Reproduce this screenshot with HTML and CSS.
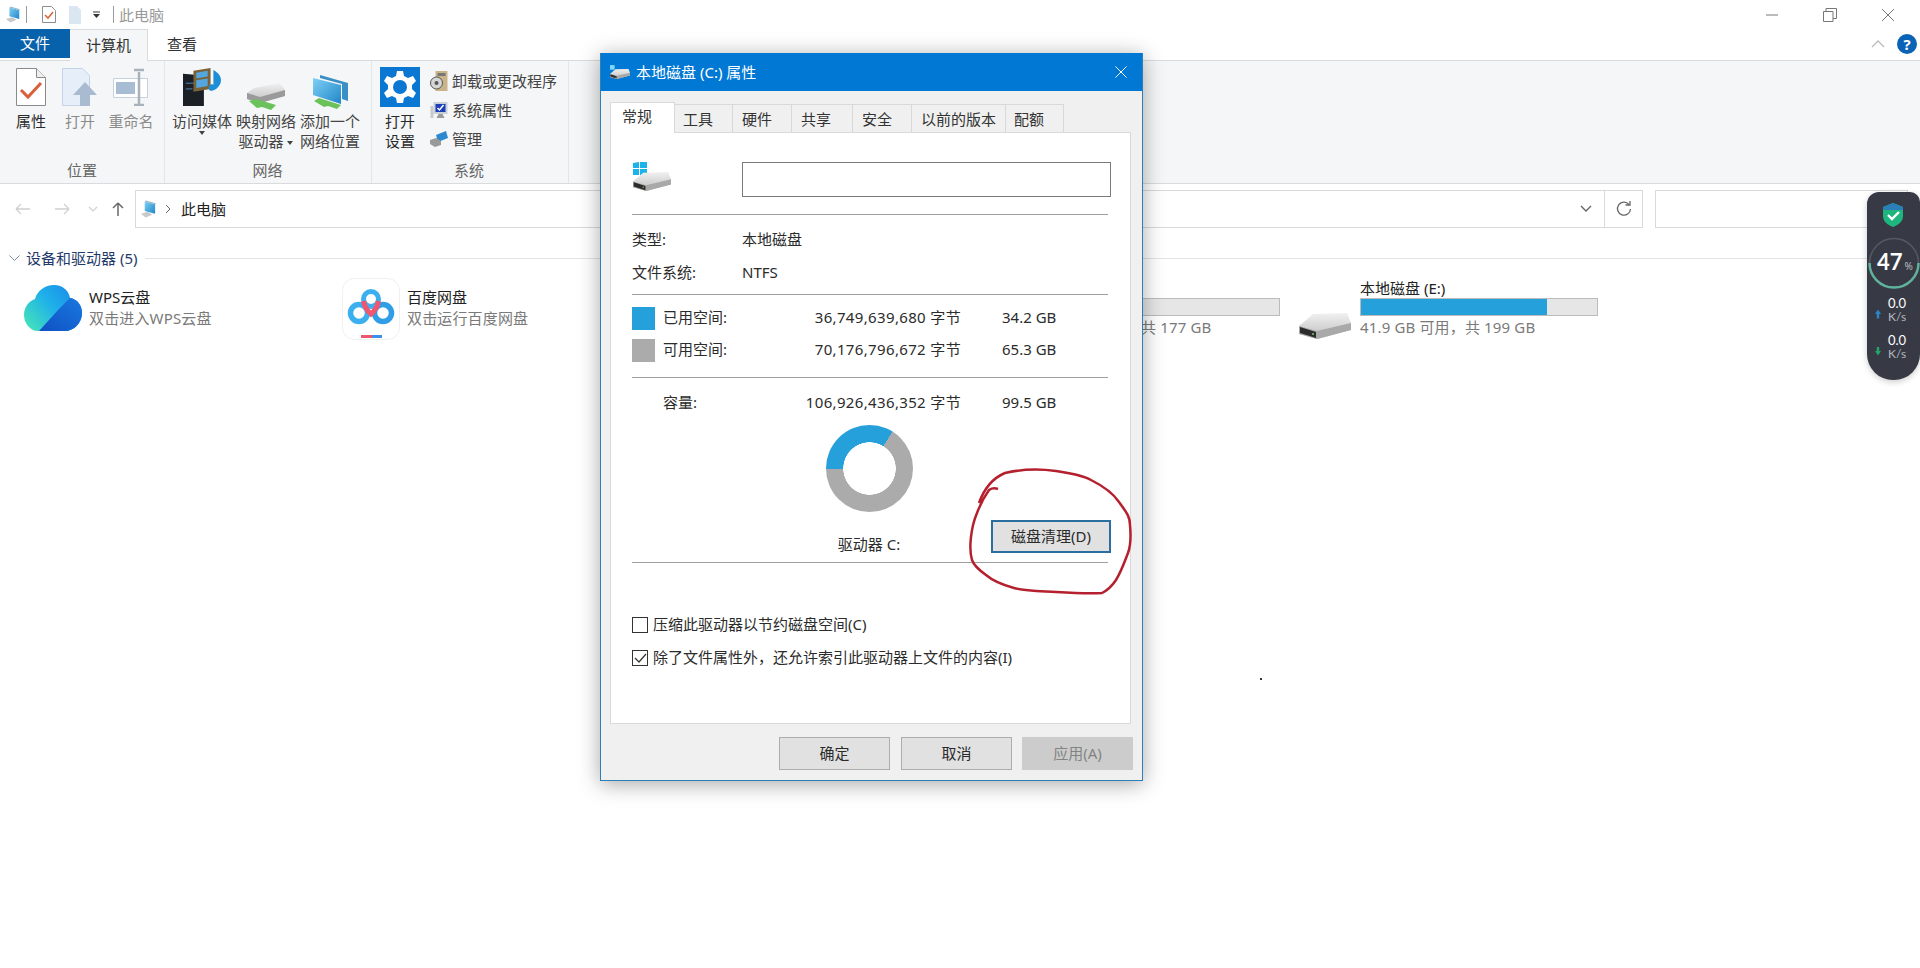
FILE: index.html
```html
<!DOCTYPE html>
<html lang="zh-CN">
<head>
  <meta charset="UTF-8" />
  <title>此电脑</title>
  <link rel="stylesheet" href="styles.css">
</head>
<body>
  <svg class="defs" width="0" height="0">
    <defs>
      <linearGradient id="g-drive" x1="0" y1="0" x2="0" y2="1">
        <stop offset="0" stop-color="#f1f1f1"/><stop offset="1" stop-color="#bdbdbd"/>
      </linearGradient>
      <linearGradient id="g-screen" x1="0" y1="0" x2="1" y2="1">
        <stop offset="0" stop-color="#7fd0f5"/><stop offset="1" stop-color="#1f86c9"/>
      </linearGradient>
      <linearGradient id="g-cloud" x1="0" y1="0.7" x2="0.9" y2="0.1">
        <stop offset="0" stop-color="#3fdcc0"/><stop offset="0.5" stop-color="#1fb0ea"/><stop offset="1" stop-color="#1a8ae8"/>
      </linearGradient>
      <linearGradient id="g-cloud-b" x1="0" y1="1" x2="1" y2="0">
        <stop offset="0" stop-color="#0f50c4"/><stop offset="1" stop-color="#1a78e0"/>
      </linearGradient>
      <symbol id="drive" viewBox="0 0 52 26">
        <path d="M14 1 L48 0 L52 10 L52 17 L18 26 L0 21 L0 13 Z" fill="url(#g-drive)"/>
        <path d="M0 13 L18 18 L52 10 L52 17 L18 26 L0 21 Z" fill="#a9a9a9"/>
        <path d="M1 14 L17 19 L17 25 L1 20 Z" fill="#2c2c2c"/>
        <circle cx="14" cy="21" r="1" fill="#7fc36a"/>
      </symbol>
      <symbol id="pc" viewBox="0 0 18 18">
        <path d="M1 14 L8 12 L13 15 L6 18 Z" fill="#c9c9c9"/>
        <path d="M5 1 L16 4 L16 14 L5 11 Z" fill="url(#g-screen)"/>
        <path d="M5 1 L6 0 L17 3 L16 4 Z" fill="#9fb6c6"/>
      </symbol>
    </defs>
  </svg>

  <div class="explorer">
    <div class="titlebar">
      <svg class="tb-pc" width="16" height="17"><use href="#pc"/></svg>
      <span class="tb-sep"></span>
      <svg class="tb-check" width="14" height="17" viewBox="0 0 14 17">
        <path d="M.5.5h9l4 4v12H.5z" fill="#fff" stroke="#8d8d8d"/>
        <path d="M3 9l3 3 5-6" fill="none" stroke="#d9663a" stroke-width="1.6"/>
      </svg>
      <svg class="tb-page" width="12" height="18" viewBox="0 0 12 18">
        <path d="M0 0h8l4 4v14H0z" fill="#dbe6f3"/>
      </svg>
      <svg class="tb-down" width="9" height="8" viewBox="0 0 9 8">
        <path d="M1 1h7" stroke="#333"/><path d="M1 3h7L4.500 7z" fill="#333"/>
      </svg>
      <span class="tb-sep tb-sep-b"></span>
      <span class="tb-title">此电脑</span>
      <div class="win-controls">
        <svg width="14" height="14" viewBox="0 0 14 14"><path d="M1 7h12" stroke="#777"/></svg>
        <svg width="14" height="14" viewBox="0 0 14 14" fill="none" stroke="#777"><path d="M.5 3.500h9.500v10H.5z"/><path d="M3 3.500V.5h10.500v10H10"/></svg>
        <svg width="14" height="14" viewBox="0 0 14 14" stroke="#777"><path d="M1 1l12 12M13 1L1 13"/></svg>
      </div>
    </div>

    <div class="tabs">
      <div class="tab-file">文件</div>
      <div class="tab tab-on">计算机</div>
      <div class="tab">查看</div>
      <div class="tabs-right">
        <svg width="14" height="8" viewBox="0 0 14 8"><path d="M1 7l6-6 6 6" fill="none" stroke="#bbb" stroke-width="1.300"/></svg>
        <div class="help">?</div>
      </div>
    </div>

    <div class="ribbon">
      <div class="group group-pos">
        <div class="group-items">
          <div class="rb rb-w50">
            <svg class="rb-icon" width="30" height="38" viewBox="0 0 30 38">
              <path d="M.5.5h20l9 9v28H.5z" fill="#fff" stroke="#8a8a8a"/>
              <path d="M20.500.5v9h9" fill="#eee" stroke="#8a8a8a"/>
              <path d="M5 22l7 7 13-14" fill="none" stroke="#d9603a" stroke-width="3"/>
            </svg>
            <div class="rb-label">属性</div>
          </div>
          <div class="rb rb-w48 rb-off">
            <svg class="rb-icon" width="36" height="38" viewBox="0 0 36 38">
              <path d="M.5.5h20l7 7v30H.5z" fill="#e6eef9" stroke="#c3d2e6"/>
              <path d="M23 14l12 13h-7v11H18V27h-7z" fill="#a9bbd0"/>
            </svg>
            <div class="rb-label">打开</div>
          </div>
          <div class="rb rb-w54 rb-off">
            <svg class="rb-icon" width="36" height="38" viewBox="0 0 36 38">
              <path d="M.5 10.500h34v19H.5z" fill="#fff" stroke="#c7d1dc"/>
              <path d="M3 14h19v12H3z" fill="#a8bcd4"/>
              <path d="M26 4v32M21 2h10M21 37h10" stroke="#a9b2bb" stroke-width="2.500" fill="none"/>
            </svg>
            <div class="rb-label">重命名</div>
          </div>
        </div>
        <div class="group-label">位置</div>
      </div>

      <div class="group group-net">
        <div class="group-items">
          <div class="rb rb-w64">
            <svg class="rb-icon" width="42" height="40" viewBox="0 0 42 40">
              <path d="M1 6l22 2v32H1z" fill="#1b2026"/>
              <path d="M4 16h10M4 22h7" stroke="#4a8cc0"/>
              <path d="M12 3l18-3v22l-18 3z" fill="#7a6238"/>
              <path d="M15 5l12-2v6l-12 2zM15 13l12-2v8l-12 2z" fill="#53a7de"/>
              <path d="M33 2c5 3 8 6 8 11 0 6-6 11-10 11s-4-6 0-7c1 0 2 0 2 1z" fill="#1c8ed8"/>
            </svg>
            <div class="rb-label">访问媒体</div>
            <div class="caret caret-under"></div>
          </div>
          <div class="rb rb-w64">
            <svg class="rb-icon rb-icon-low" width="40" height="29" viewBox="0 0 40 29">
              <path d="M8 6L34 1l5 7v6L14 21 1 17v-6z" fill="url(#g-drive)"/>
              <path d="M1 11l13 4 25-7v6L14 21 1 17z" fill="#9a9a9a"/>
              <path d="M3 19l7-2 20 6-5 5-9-3-5 1z" fill="#6cc25a"/>
            </svg>
            <div class="rb-label">映射网络<br>驱动器 <span class="caret"></span></div>
          </div>
          <div class="rb rb-w64">
            <svg class="rb-icon rb-icon-low2" width="36" height="36" viewBox="0 0 36 36">
              <path d="M8 0l28 8v18l-6-2V9L8 3z" fill="#3a8fc6"/>
              <path d="M1 3l28 7v19L1 20z" fill="url(#g-screen)"/>
              <path d="M2 26l5-3 22 7-4 4-9-3-4 1z" fill="#6cc25a"/>
            </svg>
            <div class="rb-label">添加一个<br>网络位置</div>
          </div>
        </div>
        <div class="group-label">网络</div>
      </div>

      <div class="group group-sys">
        <div class="group-items">
          <div class="rb rb-w40">
            <div class="gear-tile">
              <svg width="34" height="34" viewBox="0 0 34 34">
                <path d="M14 1h6l1 5 4 2 5-2 3 5-4 4v4l4 4-3 5-5-2-4 2-1 5h-6l-1-5-4-2-5 2-3-5 4-4v-4L1 11l3-5 5 2 4-2z" fill="#fff"/>
                <circle cx="17" cy="17" r="7" fill="#0a78d2"/>
              </svg>
            </div>
            <div class="rb-label">打开<br>设置</div>
          </div>
          <div class="rb-list">
            <div class="rb-row">
              <svg width="17" height="20" viewBox="0 0 17 20">
                <path d="M5 0h12v20H5z" fill="#c9b48a"/><path d="M7 2h8v3H7z" fill="#777"/>
                <circle cx="6" cy="12" r="6" fill="#d6d6d6" stroke="#555"/><circle cx="6" cy="12" r="2" fill="#555"/>
              </svg>
              <span>卸载或更改程序</span>
            </div>
            <div class="rb-row">
              <svg width="17" height="18" viewBox="0 0 17 18">
                <path d="M0 5h3v12H0z" fill="#c9c9c9"/>
                <path d="M3 1h14v12H3z" fill="#c8d0d8"/><path d="M5 3h10v8H5z" fill="#1a3fb8"/>
                <path d="M7 7l2 2 4-5" fill="none" stroke="#fff" stroke-width="1.500"/>
                <path d="M8 13h4l2 4H6z" fill="#9a9a9a"/>
              </svg>
              <span>系统属性</span>
            </div>
            <div class="rb-row">
              <svg width="18" height="16" viewBox="0 0 18 16">
                <path d="M6 4l10-4 2 7-10 4z" fill="#2c89cf"/>
                <path d="M0 9l6-2 5 3v4l-6 2-5-3z" fill="#9a9a9a"/>
              </svg>
              <span>管理</span>
            </div>
          </div>
        </div>
        <div class="group-label">系统</div>
      </div>
    </div>

    <div class="navbar">
      <svg class="nav-arrows" width="124" height="18" viewBox="0 0 124 18" fill="none">
        <path d="M5 9h14M5 9l5-5M5 9l5 5" stroke="#d0d0d0" stroke-width="1.300"/>
        <path d="M44 9h14M58 9l-5-5M58 9l-5 5" stroke="#d0d0d0" stroke-width="1.300"/>
        <path d="M78 7l4 4 4-4" stroke="#d0d0d0" stroke-width="1.200"/>
        <path d="M107 16V3M107 3l-5 5M107 3l5 5" stroke="#6a6a6a" stroke-width="1.500"/>
      </svg>
      <div class="addr">
        <svg class="addr-pc" width="17" height="18"><use href="#pc"/></svg>
        <svg class="addr-sep" width="6" height="10" viewBox="0 0 6 10"><path d="M1 1l4 4-4 4" fill="none" stroke="#666"/></svg>
        <span>此电脑</span>
        <svg class="addr-drop" width="12" height="8" viewBox="0 0 12 8"><path d="M1 1l5 5 5-5" fill="none" stroke="#666" stroke-width="1.400"/></svg>
      </div>
      <div class="refresh">
        <svg width="16" height="16" viewBox="0 0 16 16" fill="none">
          <path d="M13 3.500A6.500 6.500 0 1 0 14.500 8" stroke="#666" stroke-width="1.300"/>
          <path d="M9.500 4h4.500V0" stroke="#666" stroke-width="1.300"/>
        </svg>
      </div>
      <div class="search"></div>
    </div>

    <div class="section">
      <svg width="11" height="7" viewBox="0 0 11 7"><path d="M.5.5l5 5 5-5" fill="none" stroke="#7a8aa0"/></svg>
      <span class="section-name">设备和驱动器 (5)</span>
      <span class="section-line"></span>
    </div>

    <div class="tiles">
      <div class="tile">
        <svg class="tile-icon" width="58" height="46" viewBox="0 0 58 46">
          <path d="M30 0c9 0 15 6 16 13 7 1 12 7 12 15 0 10-8 18-17 18H14C6 46 0 38 0 30s5-14 11-16C13 6 21 0 30 0z" fill="url(#g-cloud)"/>
          <path d="M35 24L46 13c7 1 12 7 12 15 0 10-8 18-17 18H15z" fill="url(#g-cloud-b)"/>
        </svg>
        <div class="tile-text">
          <div class="tile-name">WPS云盘</div>
          <div class="tile-sub">双击进入WPS云盘</div>
        </div>
      </div>
      <div class="tile">
        <svg class="tile-icon tile-icon-bd" width="58" height="62" viewBox="0 0 58 62">
          <rect x=".5" y=".5" width="57" height="61" rx="12" fill="#fff" stroke="#f0f0f0"/>
          <circle cx="17" cy="35" r="8.500" fill="none" stroke="#3cb0ee" stroke-width="5.500"/>
          <circle cx="41" cy="35" r="8.500" fill="none" stroke="#2f9ee6" stroke-width="5.500"/>
          <circle cx="29" cy="21" r="7.500" fill="none" stroke="#3cb0ee" stroke-width="5"/>
          <path d="M21.500 23c1 6 4 10 7.500 13 3.500-3 6.500-7 7.500-13" fill="none" stroke="#f0566f" stroke-width="5"/>
          <path d="M19 57h11v3H19z" fill="#f0566f"/><path d="M30 57h10v3H30z" fill="#3f8fe6"/>
        </svg>
        <div class="tile-text">
          <div class="tile-name">百度网盘</div>
          <div class="tile-sub">双击运行百度网盘</div>
        </div>
      </div>
      <div class="tile"></div>
      <div class="tile">
        <svg class="tile-drive" width="52" height="26"><use href="#drive"/></svg>
        <div class="tile-text tile-text-drive">
          <div class="tile-name">本地磁盘 (D:)</div>
          <div class="bar"></div>
          <div class="tile-sub tile-sub-d">共 177 GB</div>
        </div>
      </div>
      <div class="tile">
        <svg class="tile-drive" width="52" height="26"><use href="#drive"/></svg>
        <div class="tile-text tile-text-drive">
          <div class="tile-name">本地磁盘 (E:)</div>
          <div class="bar"><div class="bar-fill" style="width: 79%"></div></div>
          <div class="tile-sub">41.9 GB 可用，共 199 GB</div>
        </div>
      </div>
    </div>
  </div>

  <!-- 属性对话框 -->
  <div class="dialog">
    <div class="dlg-title">
      <svg width="20" height="14" viewBox="0 0 52 36"><path d="M0 0h12v12H0z" fill="#7fd6ff"/><use href="#drive" y="10" width="52" height="26"/></svg>
      <span>本地磁盘 (C:) 属性</span>
      <svg class="dlg-close" width="12" height="12" viewBox="0 0 12 12" stroke="#fff"><path d="M.5.5l11 11M11.500.5l-11 11"/></svg>
    </div>
    <div class="dlg-tabs">
      <div class="dlg-tab dlg-tab-on">常规</div>
      <div class="dlg-tab dlg-tab-58">工具</div>
      <div class="dlg-tab dlg-tab-59">硬件</div>
      <div class="dlg-tab dlg-tab-61">共享</div>
      <div class="dlg-tab dlg-tab-59">安全</div>
      <div class="dlg-tab dlg-tab-94">以前的版本</div>
      <div class="dlg-tab dlg-tab-58">配额</div>
    </div>
    <div class="panel">
      <div class="name-row">
        <svg class="name-icon" width="38" height="30" viewBox="0 0 38 30">
          <path d="M0 1l6-1v6H0zM7 0l7-1v7H7zM0 7h6v6H0zM7 7h7v7L7 13z" fill="#1cb4e8"/>
          <use href="#drive" x="0" y="9" width="38" height="21"/>
        </svg>
        <div class="name-input"></div>
      </div>
      <div class="rule rule-a"></div>
      <div class="info-row first"><span class="info-key">类型:</span><span>本地磁盘</span></div>
      <div class="info-row"><span class="info-key">文件系统:</span><span>NTFS</span></div>
      <div class="rule rule-b"></div>
      <div class="space-row space-first">
        <span class="swatch swatch-used"></span><span>已用空间:</span><span class="bytes">36,749,639,680 字节</span><span class="gb">34.2 GB</span>
      </div>
      <div class="space-row space-next">
        <span class="swatch swatch-free"></span><span>可用空间:</span><span class="bytes">70,176,796,672 字节</span><span class="gb">65.3 GB</span>
      </div>
      <div class="rule rule-c"></div>
      <div class="space-row space-cap">
        <span></span><span>容量:</span><span class="bytes">106,926,436,352 字节</span><span class="gb">99.5 GB</span>
      </div>
      <div class="chart-area">
        <div class="chart-col">
          <div class="donut"></div>
          <div class="drive-label">驱动器 C:</div>
        </div>
        <div class="clean-btn">磁盘清理(D)</div>
      </div>
      <div class="rule"></div>
      <div class="check-row check-first">
        <span class="checkbox"></span><span class="check-text">压缩此驱动器以节约磁盘空间(C)</span>
      </div>
      <div class="check-row check-next">
        <span class="checkbox">
          <svg width="14" height="14" viewBox="0 0 14 14"><path d="M2 7l4 4 7-8" fill="none" stroke="#333" stroke-width="1.200"/></svg>
        </span><span class="check-text">除了文件属性外，还允许索引此驱动器上文件的内容(I)</span>
      </div>
    </div>
    <div class="dlg-foot">
      <div class="dlg-btn dlg-btn-ok">确定</div>
      <div class="dlg-btn">取消</div>
      <div class="dlg-btn dlg-btn-off">应用(A)</div>
    </div>
  </div>

  <!-- 红圈标注 -->
  <svg class="annot" width="1920" height="968" viewBox="0 0 1920 968" fill="none" stroke="#b5202e" stroke-width="2.500">
    <path d="M979 503C984 489 993 478 1005 473C1022 469 1042 469 1056 471C1070 473 1082 475 1091 480C1105 487 1113 493 1119 502C1126 512 1130 516 1130 525C1131 536 1131 545 1128 553C1124 563 1122 570 1116 580C1112 586 1108 590 1102 593C1088 594 1072 593 1056 592C1040 591 1026 591 1014 588C1003 585 993 581 986 575C979 570 974 566 972 560C970 553 970 545 971 537C972 528 974 520 977 513C980 505 984 497 989 490C992 488 995 488 998 489"/>
  </svg>
  <div class="speck"></div>

  <!-- 悬浮窗 -->
  <div class="widget">
    <svg class="w-shield" width="22" height="24" viewBox="0 0 22 24">
      <path d="M11 0l10 4v9c0 6-5 9-10 11C6 22 1 19 1 13V4z" fill="#1fb57e"/>
      <path d="M11 0l10 4v3H1V4z" fill="#2b7fb8"/>
      <path d="M6 12l4 4 7-7" fill="none" stroke="#fff" stroke-width="2.400"/>
    </svg>
    <div class="w-gauge">
      <svg class="w-ring" width="54" height="54" viewBox="0 0 54 54" fill="none">
        <circle cx="27" cy="27" r="24.500" stroke="#555963" stroke-width="1.500"/>
        <path d="M2.500 27a24.500 24.500 0 0 0 49 0" stroke="#5fb39b" stroke-width="2.500"/>
      </svg>
      <span class="w-num">47</span><span class="w-pct">%</span>
    </div>
    <div class="w-speed w-speed-up">
      <span class="w-arrow w-arrow-up"></span>
      <div class="w-val"><div>0.0</div><div class="w-unit">K/s</div></div>
    </div>
    <div class="w-speed">
      <span class="w-arrow w-arrow-down"></span>
      <div class="w-val"><div>0.0</div><div class="w-unit">K/s</div></div>
    </div>
  </div>
</body>
</html>
```

FILE: styles.css
```css
* { box-sizing: border-box; }

html, body {
  margin: 0;
  height: 968px;
  overflow: hidden;
  background: #fff;
}

body {
  position: relative;
  font-family: "Noto Sans", "Noto Sans CJK SC", sans-serif;
  font-size: 15px;
  line-height: 20px;
  color: #2b2b2b;
}

.defs { position: absolute; }

/* 标题栏 */
.titlebar {
  display: flex;
  align-items: center;
  height: 29px;
  padding-left: 5px;
}
.tb-sep { width: 1px; height: 17px; background: #9a9a9a; margin-left: 5px; }
.tb-check { margin-left: 15px; }
.tb-page { margin-left: 13px; }
.tb-down { margin-left: 11px; }
.tb-sep-b { margin-left: 12px; }
.tb-title { margin-left: 5px; color: #999; }
.win-controls {
  margin-left: auto;
  display: flex;
  gap: 44px;
  padding-right: 25px;
}

/* 选项卡 */
.tabs {
  display: flex;
  height: 32px;
  border-bottom: 1px solid #dadbdc;
}
.tab-file {
  width: 70px;
  height: 29px;
  background: #0862ab;
  color: #fff;
  text-align: center;
  line-height: 28px;
}
.tab {
  padding: 0 19px;
  line-height: 30px;
  color: #333;
}
.tab-on {
  width: 78px;
  padding: 0;
  height: 32px;
  text-align: center;
  background: #f5f6f7;
  border: 1px solid #dadbdc;
  border-bottom: 0;
  border-left: 0;
  z-index: 1;
}
.tabs-right {
  margin-left: auto;
  display: flex;
  align-items: center;
  gap: 12px;
  padding: 0 3px 2px 0;
}
.help {
  width: 20px;
  height: 20px;
  border-radius: 50%;
  background: #0a63b5;
  color: #fff;
  font-weight: bold;
  font-size: 15px;
  text-align: center;
  line-height: 20px;
}

/* 功能区 */
.ribbon {
  display: flex;
  height: 123px;
  background: #f5f6f7;
  border-bottom: 1px solid #dadbdc;
}
.group {
  display: flex;
  flex-direction: column;
  border-right: 1px solid #e4e5e6;
}
.group-pos { width: 165px; padding-left: 6px; }
.group-net { width: 207px; padding-left: 5px; }
.group-sys { width: 197px; padding-left: 8px; }
.group-items { display: flex; flex: 1; padding-top: 6px; }
.group-label {
  height: 24px;
  line-height: 22px;
  text-align: center;
  color: #666;
  margin-left: -6px;
}
.group-sys .group-label { margin-left: -10px; }
.rb {
  position: relative;
  display: flex;
  flex-direction: column;
  align-items: center;
  text-align: center;
  white-space: nowrap;
}
.rb-w40 { width: 40px; }
.rb-w48 { width: 48px; }
.rb-w50 { width: 50px; }
.rb-w54 { width: 54px; }
.rb-w64 { width: 64px; }
.rb-off { color: #8b8b8b; }
.rb-icon { height: 38px; margin-bottom: 5px; margin-top: 1px; flex: none; }
.rb-icon-low { margin-top: 15px; margin-bottom: 0; height: 29px; }
.rb-icon-low2 { margin-top: 8px; margin-bottom: 0; height: 36px; }
.rb-label { line-height: 20px; color: inherit; }
.rb-w64 .rb-label { color: #444; }
.caret {
  display: inline-block;
  width: 0;
  height: 0;
  border: 3px solid transparent;
  border-top: 4px solid #444;
  border-bottom: 0;
  vertical-align: middle;
}
.gear-tile {
  display: flex;
  align-items: center;
  justify-content: center;
  width: 40px;
  height: 40px;
  background: #0a78d2;
  margin-bottom: 4px;
}
.rb-list {
  margin-left: 10px;
  padding-top: 4px;
  display: flex;
  flex-direction: column;
  gap: 9px;
}
.rb-row {
  display: flex;
  align-items: center;
  height: 20px;
  white-space: nowrap;
  color: #444;
}
.rb-row svg { width: 18px; margin-right: 4px; }

/* 地址栏 */
.navbar {
  display: flex;
  align-items: center;
  height: 44px;
  padding-top: 6px;
}
.nav-arrows { margin-left: 11px; flex: none; }
.addr {
  display: flex;
  align-items: center;
  width: 1469px;
  height: 38px;
  border: 1px solid #d9d9d9;
  border-right: 0;
  color: #222;
}
.addr-pc { margin-left: 4px; }
.addr-sep { margin-left: 8px; }
.addr span { margin-left: 10px; }
.addr-drop { margin-left: auto; margin-right: 12px; }
.refresh {
  display: flex;
  align-items: center;
  justify-content: center;
  width: 39px;
  height: 38px;
  border: 1px solid #d9d9d9;
}
.search {
  width: 253px;
  height: 38px;
  margin-left: 12px;
  border: 1px solid #d9d9d9;
}

/* 内容区 */
.section {
  display: flex;
  align-items: center;
  height: 24px;
  margin-top: 18px;
  padding-left: 9px;
}
.section-name { margin-left: 6px; color: #1f3a6b; white-space: nowrap; }
.section-line { flex: 1; height: 1px; margin-left: 8px; background: #e2e4e8; }

.tiles {
  display: flex;
  padding-left: 24px;
  margin-top: 8px;
}
.tile {
  display: flex;
  width: 318px;
  flex: none;
  height: 62px;
  position: relative;
}
.tile-icon { margin-top: 7px; flex: none; }
.tile-icon-bd { margin-top: 0; }
.tile-text { margin-left: 7px; padding-top: 9px; white-space: nowrap; }
.tile-name { color: #222; line-height: 21px; }
.tile-sub { color: #7a7a7a; line-height: 21px; letter-spacing: .15px; }
.tile-drive { margin: 35px 0 0 3px; flex: none; }
.tile-text-drive { margin-left: 9px; width: 238px; padding-top: 0; }
.tile-text-drive .tile-name { line-height: 20px; }
.tile-text-drive .tile-sub { margin-top: 1px; }
.tile-sub-d { padding-left: 99px; }
.bar {
  height: 18px;
  background: #e6e6e6;
  border: 1px solid #bcbcbc;
}
.bar-fill {
  height: 100%;
  background: #26a0da;
}

/* 对话框 */
.dialog {
  position: absolute;
  left: 600px;
  top: 53px;
  width: 543px;
  height: 728px;
  background: #f0f0f0;
  border: 1px solid #2d7fb8;
  border-top: 0;
  box-shadow: 0 3px 20px rgba(0, 0, 0, .35);
  display: flex;
  flex-direction: column;
  z-index: 5;
}
.dlg-title {
  display: flex;
  align-items: center;
  height: 38px;
  flex: none;
  padding-left: 9px;
  background: #0078d4;
  color: #fff;
}
.dlg-title span { margin-left: 6px; }
.dlg-close { margin-left: auto; margin-right: 15px; }
.dlg-tabs {
  display: flex;
  align-items: flex-end;
  height: 41px;
  flex: none;
  padding-left: 9px;
}
.dlg-tab {
  height: 28px;
  padding-left: 9px;
  background: #f0f0f0;
  border: 1px solid #d9d9d9;
  border-left: 0;
  border-bottom: 0;
  line-height: 28px;
  color: #333;
  white-space: nowrap;
}
.dlg-tab-on {
  position: relative;
  width: 65px;
  height: 31px;
  padding-left: 11px;
  background: #fff;
  border-left: 1px solid #d9d9d9;
  line-height: 26px;
  margin-bottom: -1px;
  z-index: 1;
}
.dlg-tab-58 { width: 58px; padding-left: 8px; }
.dlg-tab-59 { width: 59px; }
.dlg-tab-61 { width: 61px; }
.dlg-tab-94 { width: 94px; }

.panel {
  width: 521px;
  height: 592px;
  flex: none;
  margin-left: 9px;
  padding: 29px 22px 0 21px;
  background: #fff;
  border: 1px solid #d9d9d9;
}
.name-row { display: flex; height: 35px; }
.name-icon { width: 38px; margin-left: 1px; flex: none; }
.name-input {
  width: 369px;
  height: 35px;
  margin-left: 71px;
  flex: none;
  border: 1px solid #7a7a7a;
}
.rule { height: 1px; background: #a0a0a0; }
.rule-a { margin-top: 17px; }
.rule-b { margin-top: 4px; }
.rule-c { margin-top: 15px; }
.info-row {
  display: flex;
  height: 33px;
  align-items: center;
}
.info-row span { padding-bottom: 3px; }
.info-row.first { margin-top: 9px; }
.info-key { width: 110px; }
.space-row {
  display: grid;
  grid-template-columns: 31px 100px 198px 41px auto;
  align-items: center;
  height: 23px;
  white-space: nowrap;
}
.space-row span:not(.swatch) { padding-bottom: 3px; }
.space-first { margin-top: 12px; }
.space-next { margin-top: 9px; }
.space-cap { margin-top: 13px; height: 24px; }
.swatch { width: 23px; height: 23px; }
.swatch-used { background: #26a0da; }
.swatch-free { background: #ababab; }
.bytes { text-align: right; letter-spacing: .35px; }
.gb { grid-column: 5; }

.chart-area { display: flex; height: 147px; }
.chart-col {
  display: flex;
  flex-direction: column;
  align-items: center;
  width: 86px;
  margin-left: 194px;
  padding-top: 10px;
  flex: none;
}
.donut {
  width: 87px;
  height: 87px;
  flex: none;
  border-radius: 50%;
  background:
    radial-gradient(circle, #fff 0 26px, transparent 26.500px),
    conic-gradient(from 32deg, #ababab 0 238deg, #26a0da 238deg 360deg);
}
.drive-label { margin-top: 20px; line-height: 24px; white-space: nowrap; }
.clean-btn {
  width: 120px;
  height: 33px;
  margin: 105px 0 0 79px;
  flex: none;
  background: #e1e1e1;
  border: 2px solid #2a6f9f;
  text-align: center;
  line-height: 28px;
}
.check-row {
  display: flex;
  align-items: center;
  height: 16px;
  gap: 5px;
  white-space: nowrap;
}
.check-text { padding-bottom: 2px; }
.check-first { margin-top: 54px; }
.check-next { margin-top: 17px; }
.checkbox {
  display: flex;
  width: 16px;
  height: 16px;
  flex: none;
  background: #fff;
  border: 1px solid #333;
}
.dlg-foot {
  display: flex;
  justify-content: flex-end;
  gap: 10px;
  padding: 13px 9px 0 0;
}
.dlg-btn {
  width: 111px;
  height: 33px;
  background: #e1e1e1;
  border: 1px solid #adadad;
  text-align: center;
  line-height: 31px;
}
.dlg-btn-ok { margin-right: 1px; }
.dlg-btn-off {
  background: #cccccc;
  border-color: #cccccc;
  color: #838383;
}

/* 标注 */
.annot {
  position: absolute;
  left: 0;
  top: 0;
  z-index: 6;
  pointer-events: none;
}
.speck {
  position: absolute;
  left: 1260px;
  top: 678px;
  width: 2px;
  height: 2px;
  background: #333;
}

/* 悬浮窗 */
.widget {
  position: absolute;
  left: 1867px;
  top: 192px;
  width: 53px;
  height: 188px;
  background: #373a45;
  border-radius: 12px 10px 26px 26px;
  box-shadow: 0 2px 6px rgba(0, 0, 0, .2);
  color: #fff;
  z-index: 7;
}
.w-shield { display: block; margin: 11px 0 0 15px; }
.w-gauge {
  position: relative;
  display: flex;
  align-items: baseline;
  justify-content: flex-start;
  height: 54px;
  margin-top: 9px;
  padding: 13px 0 0 10px;
}
.w-ring { position: absolute; left: 0; top: 0; }
.w-num { font-family: "Lato", sans-serif; font-weight: bold; font-size: 22px; line-height: 26px; }
.w-pct { font-size: 10px; margin-left: 2px; color: #bbb; }
.w-speed {
  display: flex;
  align-items: center;
  margin-top: 9px;
  padding-left: 8px;
}
.w-speed-up { margin-top: 6px; }
.w-arrow { width: 6px; height: 9px; margin-top: 8px; }
.w-arrow-up { background: #2b86c9; clip-path: polygon(50% 0, 100% 50%, 70% 50%, 70% 100%, 30% 100%, 30% 50%, 0 50%); }
.w-arrow-down { background: #22a565; clip-path: polygon(30% 0, 70% 0, 70% 50%, 100% 50%, 50% 100%, 0 50%, 30% 50%); }
.w-val { margin-left: 7px; text-align: center; font-size: 13px; line-height: 14px; font-family: "Lato", sans-serif; }
.w-unit { font-size: 12px; color: #b5b8bf; }
```
